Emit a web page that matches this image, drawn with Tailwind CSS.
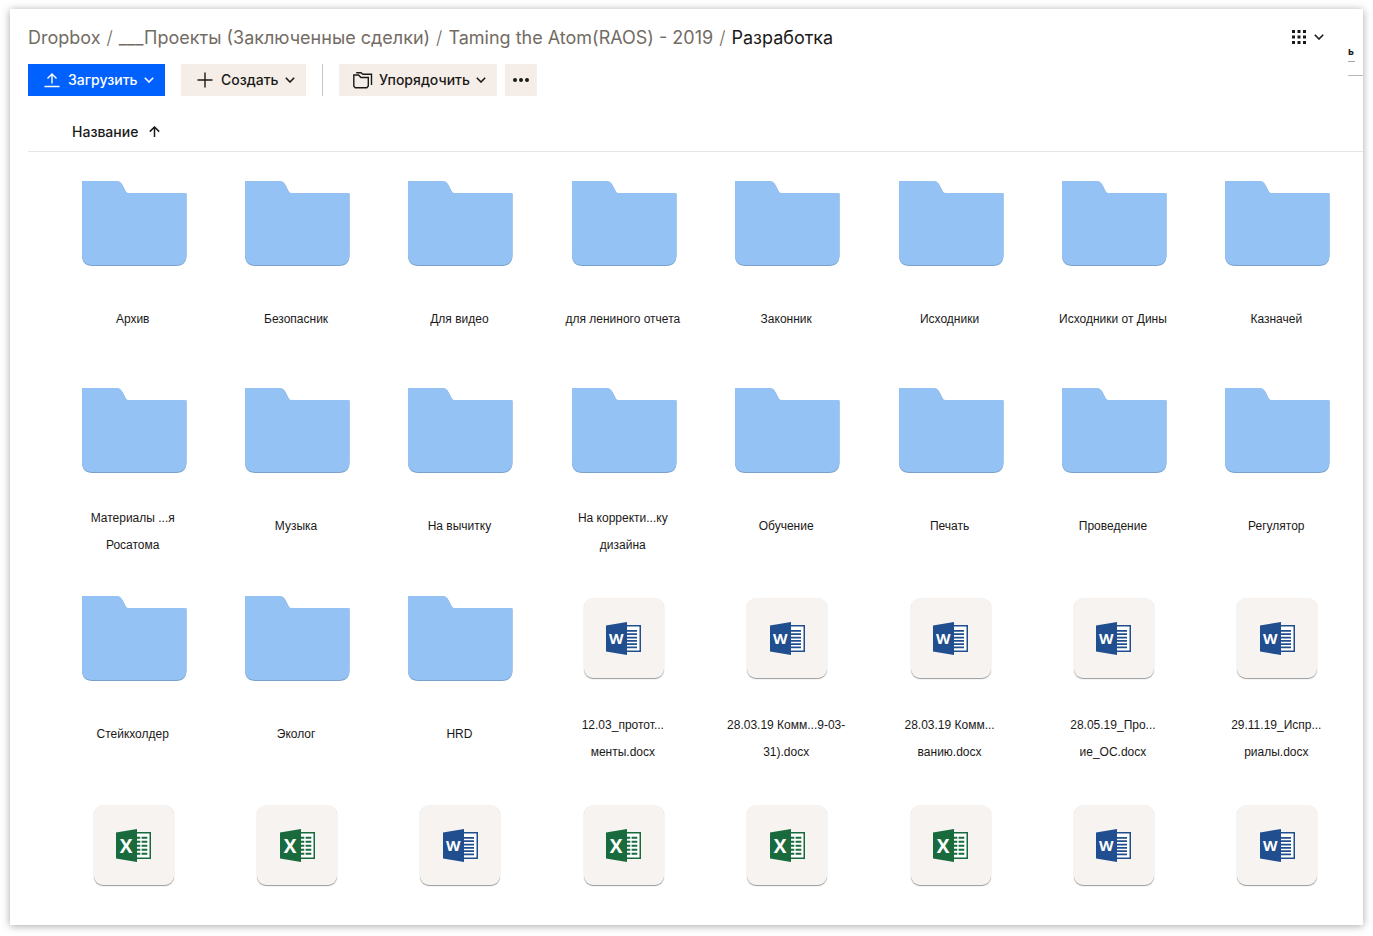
<!DOCTYPE html>
<html lang="ru">
<head>
<meta charset="utf-8">
<meta name="viewport" content="width=device-width, initial-scale=1">
<title>Dropbox</title>
<script src="https://cdn.jsdelivr.net/npm/@tailwindcss/browser@4"></script>
</head>
<body class="flex min-h-screen flex-col bg-white px-[10px] pt-[9px] pb-[11px] font-['Liberation_Sans',sans-serif] text-[#1b1918]">
<svg class="hidden">
  <symbol id="folder" viewBox="0 0 108 86">
    <path d="M3 1H38.500C41 1 42.500 2 43.500 4L46.500 10C47.300 11.800 48 13 50 13H107.500V74.500C107.500 81 104 85 97 85H13.500C6.500 85 3 81 3 74.500Z" fill="#78a1cb"/>
    <path d="M3 0H37.500C41 0 42 1.500 43.200 4L46 9C47 11 47.600 12 49.800 12H107.500V73.500C107.500 80 104 84 97 84H13.500C6.500 84 3 80 3 73.500Z" fill="#95c2f4"/>
  </symbol>
  <symbol id="word" viewBox="0 0 35 33">
    <path d="M19 3H35V30H19Z" fill="#204e8f"/><path d="M19 4.500H33.500V28.500H19Z" fill="#fff"/>
    <path d="M20 8.800H31M20 12.200H31M20 15.600H31M20 18.900H31M20 22.200H31M20 25.400H31" stroke="#204e8f" stroke-width="1.700"/>
    <path d="M0 3.500L21 0V33L0 29.500Z" fill="#204e8f"/>
    <text x="10.300" y="22" text-anchor="middle" font-family="Open Sans, sans-serif" font-weight="700" font-size="15" fill="#fff">W</text>
  </symbol>
  <symbol id="excel" viewBox="0 0 35 33">
    <path d="M19 3H35V30H19Z" fill="#196b3e"/><path d="M19 4.500H33.500V28.500H19Z" fill="#fff"/>
    <path d="M20 8.800H24.300M25.600 8.800H31.300M20 12.800H24.300M25.600 12.800H31.300M20 16.700H24.300M25.600 16.700H31.300M20 20.700H24.300M25.600 20.700H31.300M20 24.700H24.300M25.600 24.700H31.300" stroke="#196b3e" stroke-width="2"/>
    <path d="M0 3.500L21 0V33L0 29.500Z" fill="#196b3e"/>
    <text x="10" y="23.500" text-anchor="middle" font-family="Open Sans, sans-serif" font-weight="700" font-size="19" fill="#fff">X</text>
  </symbol>
  <symbol id="chevron" viewBox="0 0 10 6"><path d="M.8 .8L5 5L9.200 .8" fill="none" stroke="currentColor" stroke-width="1.600"/></symbol>
</svg>

<main class="flex-1 overflow-hidden bg-white shadow-[0_1px_8px_rgba(0,0,0,0.35)]">
  <header class="flex pl-[18px]">
    <div class="flex-1">
      <nav aria-label="Путь" class="flex h-[55px] items-center pt-px font-['Inter',sans-serif] text-[18px] whitespace-pre text-[#736c64]">
        <a href="#">Dropbox</a><span class="px-[6px] font-light">/</span><a href="#">___Проекты (Заключенные сделки)</a><span class="px-[6px] font-light">/</span><a href="#">Taming the Atom(RAOS) - 2019</a><span class="px-[6px] font-light">/</span><a href="#" aria-current="page" class="text-[#1b1918]">Разработка</a>
      </nav>
      <div class="flex h-8 items-center font-['Inter',sans-serif] text-[14px] font-medium [&_span]:pb-px [&_span]:text-left">
        <button class="flex h-8 w-[137px] items-center bg-[#0061fe] pl-4 text-white">
          <svg class="mr-2 h-4 w-4" viewBox="0 0 16 16" fill="none" stroke="currentColor" stroke-width="1.400"><path d="M.5 14.500H15.500M8 11.500V2.500M3.500 6.500L8 2L12.500 6.500"/></svg>
          <span class="w-[70px]">Загрузить</span>
          <svg class="ml-[6px] h-[6px] w-[10px]"><use href="#chevron"/></svg>
        </button>
        <button class="ml-4 flex h-8 w-[125px] items-center bg-[#f5eee8] pl-4">
          <svg class="mr-2 h-4 w-4" viewBox="0 0 16 16" stroke="currentColor" stroke-width="1.400"><path d="M8 .5V15.500M.5 8H15.500"/></svg>
          <span class="w-[58px]">Создать</span>
          <svg class="ml-[6px] h-[6px] w-[10px]"><use href="#chevron"/></svg>
        </button>
        <div class="mx-4 h-8 w-px bg-[#c6c2bd]"></div>
        <button class="flex h-8 w-[158px] items-center bg-[#f5eee8] pl-[14px]">
          <svg class="mr-[6px] h-[17px] w-5" viewBox="0 0 20 17" fill="none" stroke="currentColor" stroke-width="1.400"><path d="M.8 3H5.500L8 5.500H15.300V14L13.800 15.800H2.300L.8 14.300Z"/><path d="M3.200 .8H8L10 2.300H18.500V13"/></svg>
          <span class="w-[91px]">Упорядочить</span>
          <svg class="ml-[6px] h-[6px] w-[10px]"><use href="#chevron"/></svg>
        </button>
        <button aria-label="Ещё" class="ml-2 flex h-8 w-8 items-center justify-center bg-[#f5eee8]">
          <svg class="h-1 w-4" viewBox="0 0 16 4" fill="currentColor"><circle cx="2" cy="2" r="2"/><circle cx="8" cy="2" r="2"/><circle cx="14" cy="2" r="2"/></svg>
        </button>
      </div>
    </div>
    <button aria-label="Вид" class="mt-[18px] mr-6 flex h-5 w-8 items-center justify-between">
      <svg class="h-[14px] w-[14px]" viewBox="0 0 14 14" fill="currentColor"><path d="M0 0h3v3H0zM5.500 0h3v3h-3zM11 0h3v3h-3zM0 5.500h3v3H0zM5.500 5.500h3v3h-3zM11 5.500h3v3h-3zM0 11h3v3H0zM5.500 11h3v3h-3zM11 11h3v3h-3z"/></svg>
      <svg class="h-[6px] w-[10px]"><use href="#chevron"/></svg>
    </button>
    <aside class="mt-[36px] h-[31px] w-[15px] border-b border-[#bdb8b2] font-['Inter',sans-serif] text-[10px] font-bold">
      <a href="#" class="block h-[17px] w-[7px] border-b border-[#aaa5a0] leading-[13px]">ь</a>
    </aside>
  </header>

  <div class="ml-[18px] flex h-[56px] items-center border-b border-[#e6e6e6] pt-4 pl-11">
    <button class="flex h-5 items-center gap-[11px] font-['Inter',sans-serif] text-[14px] font-medium">Название
      <svg class="h-[11px] w-[11px]" viewBox="0 0 11 11" fill="none" stroke="currentColor" stroke-width="1.500"><path d="M5.500 11V1.200M.8 5.600L5.500 1L10.200 5.600"/></svg>
    </button>
  </div>

  <ul class="mr-[5px] ml-[41px] grid auto-rows-auto grid-cols-8 grid-rows-[207px_208px_207px] text-center text-[12px] leading-[27px] [&_a]:flex [&_a]:flex-col [&_a]:items-center [&_b]:flex [&_b]:h-[146px] [&_b]:justify-center [&_b]:pt-[29px] [&_b>svg]:h-[86px] [&_b>svg]:w-[108px] [&_i]:mt-[31px] [&_i]:mb-[34px] [&_i]:ml-[2px] [&_i]:flex [&_i]:h-[80px] [&_i]:w-[80px] [&_i]:items-center [&_i]:justify-center [&_i]:rounded-[9px] [&_i]:bg-[#f7f3f0] [&_i]:not-italic [&_i]:shadow-[0_1px_1px_rgba(0,0,0,0.4)] [&_i>svg]:h-[33px] [&_i>svg]:w-[35px] [&_span]:flex [&_span]:min-h-[43px] [&_span]:items-center [&_span]:whitespace-nowrap">
    <li><a href="#"><b><svg><use href="#folder"/></svg></b><span>Архив</span></a></li>
    <li><a href="#"><b><svg><use href="#folder"/></svg></b><span>Безопасник</span></a></li>
    <li><a href="#"><b><svg><use href="#folder"/></svg></b><span>Для видео</span></a></li>
    <li><a href="#"><b><svg><use href="#folder"/></svg></b><span>для лениного отчета</span></a></li>
    <li><a href="#"><b><svg><use href="#folder"/></svg></b><span>Законник</span></a></li>
    <li><a href="#"><b><svg><use href="#folder"/></svg></b><span>Исходники</span></a></li>
    <li><a href="#"><b><svg><use href="#folder"/></svg></b><span>Исходники от Дины</span></a></li>
    <li><a href="#"><b><svg><use href="#folder"/></svg></b><span>Казначей</span></a></li>

    <li><a href="#"><b><svg><use href="#folder"/></svg></b><span>Материалы ...я<br>Росатома</span></a></li>
    <li><a href="#"><b><svg><use href="#folder"/></svg></b><span>Музыка</span></a></li>
    <li><a href="#"><b><svg><use href="#folder"/></svg></b><span>На вычитку</span></a></li>
    <li><a href="#"><b><svg><use href="#folder"/></svg></b><span>На корректи...ку<br>дизайна</span></a></li>
    <li><a href="#"><b><svg><use href="#folder"/></svg></b><span>Обучение</span></a></li>
    <li><a href="#"><b><svg><use href="#folder"/></svg></b><span>Печать</span></a></li>
    <li><a href="#"><b><svg><use href="#folder"/></svg></b><span>Проведение</span></a></li>
    <li><a href="#"><b><svg><use href="#folder"/></svg></b><span>Регулятор</span></a></li>

    <li><a href="#"><b><svg><use href="#folder"/></svg></b><span>Стейкхолдер</span></a></li>
    <li><a href="#"><b><svg><use href="#folder"/></svg></b><span>Эколог</span></a></li>
    <li><a href="#"><b><svg><use href="#folder"/></svg></b><span>HRD</span></a></li>
    <li><a href="#"><i><svg><use href="#word"/></svg></i><span>12.03_протот...<br>менты.docx</span></a></li>
    <li><a href="#"><i><svg><use href="#word"/></svg></i><span>28.03.19 Комм...9-03-<br>31).docx</span></a></li>
    <li><a href="#"><i><svg><use href="#word"/></svg></i><span>28.03.19 Комм...<br>ванию.docx</span></a></li>
    <li><a href="#"><i><svg><use href="#word"/></svg></i><span>28.05.19_Про...<br>ие_ОС.docx</span></a></li>
    <li><a href="#"><i><svg><use href="#word"/></svg></i><span>29.11.19_Испр...<br>риалы.docx</span></a></li>

    <li><a href="#" aria-label="Таблица Excel"><i><svg><use href="#excel"/></svg></i></a></li>
    <li><a href="#" aria-label="Таблица Excel"><i><svg><use href="#excel"/></svg></i></a></li>
    <li><a href="#" aria-label="Документ Word"><i><svg><use href="#word"/></svg></i></a></li>
    <li><a href="#" aria-label="Таблица Excel"><i><svg><use href="#excel"/></svg></i></a></li>
    <li><a href="#" aria-label="Таблица Excel"><i><svg><use href="#excel"/></svg></i></a></li>
    <li><a href="#" aria-label="Таблица Excel"><i><svg><use href="#excel"/></svg></i></a></li>
    <li><a href="#" aria-label="Документ Word"><i><svg><use href="#word"/></svg></i></a></li>
    <li><a href="#" aria-label="Документ Word"><i><svg><use href="#word"/></svg></i></a></li>
  </ul>
</main>
</body>
</html>
